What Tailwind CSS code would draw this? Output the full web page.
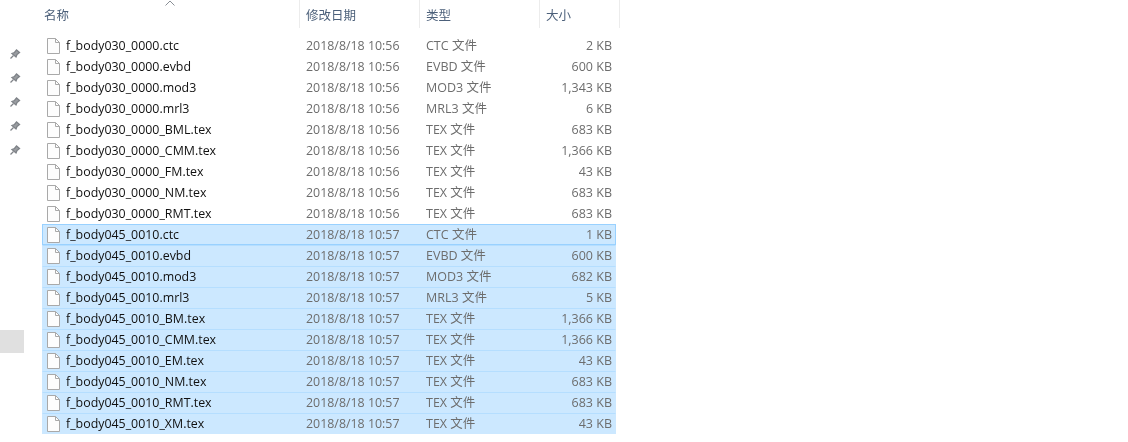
<!DOCTYPE html>
<html lang="zh-CN">
<head>
  <meta charset="UTF-8" />
  <title>文件列表</title>
  <script src="https://cdn.jsdelivr.net/npm/@tailwindcss/browser@4"></script>
</head>
<body class="bg-white h-[442px] w-[1128px] overflow-hidden font-['Open_Sans','Noto_Sans_CJK_SC',sans-serif] text-[12.5px]">
  <div class="flex h-full blur-[0.5px]">
    <!-- left rail -->
    <div class="w-[42px] shrink-0 flex flex-col">
      <div id="pins" class="flex flex-col gap-[14px] pt-[49px] pl-[9px] h-[330px]"></div>
      <div class="w-[24px] h-[23px] bg-[#e0e0e0]"></div>
    </div>

    <div class="w-[578px]">
      <!-- header -->
      <div class="relative flex h-[35px] text-[#4c607a]">
        <svg class="absolute left-[123px] top-[0px]" width="10" height="6" viewBox="0 0 10 6" fill="none" stroke="#8a8f96" stroke-width="1"><path d="M0.5 5.5 L5 1 L9.5 5.5"/></svg>
        <div class="w-[258px] pl-[2px] pt-[7px] border-r border-[#ececec] h-[28px]">名称</div>
        <div class="w-[120px] pl-[6px] pt-[7px] border-r border-[#ececec] h-[28px]">修改日期</div>
        <div class="w-[120px] pl-[6px] pt-[7px] border-r border-[#ececec] h-[28px]">类型</div>
        <div class="w-[80px] pl-[6px] pt-[7px] border-r border-[#ececec] h-[28px]">大小</div>
      </div>
      <!-- rows -->
      <div id="rows" class="w-[574px]"></div>
    </div>
  </div>

  <script>
    const pin = `<svg width="12" height="10" viewBox="0 0 12 10" fill="none" stroke="#7f8388" stroke-width="1.3"><path d="M1.5 9.5 L4.5 6.5"/><path d="M3 4.5 L7 8 L8 5.5 L10.5 3.5 L7.5 1 L5.5 3.5 Z" fill="#9a9da1"/></svg>`;
    document.getElementById("pins").innerHTML = pin.repeat(5);

    const files = [
      ["f_body030_0000.ctc", "10:56", "CTC", "2 KB"],
      ["f_body030_0000.evbd", "10:56", "EVBD", "600 KB"],
      ["f_body030_0000.mod3", "10:56", "MOD3", "1,343 KB"],
      ["f_body030_0000.mrl3", "10:56", "MRL3", "6 KB"],
      ["f_body030_0000_BML.tex", "10:56", "TEX", "683 KB"],
      ["f_body030_0000_CMM.tex", "10:56", "TEX", "1,366 KB"],
      ["f_body030_0000_FM.tex", "10:56", "TEX", "43 KB"],
      ["f_body030_0000_NM.tex", "10:56", "TEX", "683 KB"],
      ["f_body030_0000_RMT.tex", "10:56", "TEX", "683 KB"],
      ["f_body045_0010.ctc", "10:57", "CTC", "1 KB"],
      ["f_body045_0010.evbd", "10:57", "EVBD", "600 KB"],
      ["f_body045_0010.mod3", "10:57", "MOD3", "682 KB"],
      ["f_body045_0010.mrl3", "10:57", "MRL3", "5 KB"],
      ["f_body045_0010_BM.tex", "10:57", "TEX", "1,366 KB"],
      ["f_body045_0010_CMM.tex", "10:57", "TEX", "1,366 KB"],
      ["f_body045_0010_EM.tex", "10:57", "TEX", "43 KB"],
      ["f_body045_0010_NM.tex", "10:57", "TEX", "683 KB"],
      ["f_body045_0010_RMT.tex", "10:57", "TEX", "683 KB"],
      ["f_body045_0010_XM.tex", "10:57", "TEX", "43 KB"],
    ];

    const icon = `<svg class="shrink-0" width="13" height="16" viewBox="0 0 13 16" fill="#fdfdfd" stroke="#a9a9a9"><path d="M0.5 0.5 H8.5 L12.5 4.5 V15.5 H0.5 Z"/><path d="M8.5 0.5 V4.5 H12.5" fill="none"/></svg>`;

    document.getElementById("rows").innerHTML = files.map((f, i) => {
      const selected = i >= 9;
      const rowClass = selected
        ? (i === 9 ? "bg-[#cce8ff] border border-[#99d1ff]" : "bg-[#cce8ff] border border-transparent border-t-[#b5deff]")
        : "border border-transparent";
      return `
        <div class="flex items-center h-[21px] leading-[19px] ${rowClass}">
          <div class="w-[257px] flex items-center gap-[6px] pl-[4px] text-[12.4px] text-[#111111]">${icon}<span>${f[0]}</span></div>
          <div class="w-[120px] pl-[6px] text-[12.4px] text-[#6d6d6d]">2018/8/18 ${f[1]}</div>
          <div class="w-[120px] pl-[6px] text-[#6d6d6d]">${f[2]} 文件</div>
          <div class="w-[72px] text-right text-[#6d6d6d]">${f[3]}</div>
        </div>`;
    }).join("");
  </script>
</body>
</html>
